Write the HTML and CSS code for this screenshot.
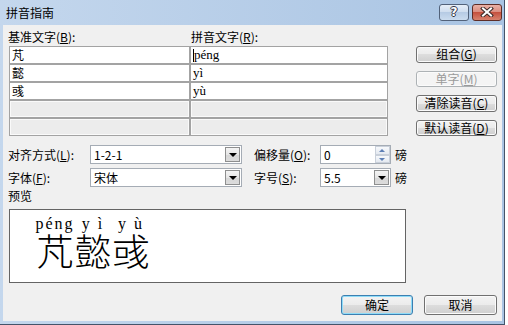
FILE: index.html
```html
<!DOCTYPE html>
<html lang="zh-CN">
<head>
  <meta charset="UTF-8">
  <title>拼音指南</title>
  <link rel="stylesheet" href="styles.css">
</head>
<body>
  <div class="window">
    <div class="titlebar">
      <span class="title">拼音指南</span>
      <div class="caption">
        <span class="cap help">?</span>
        <span class="cap close">
          <svg width="14" height="10" viewBox="0 0 14 10">
            <path d="M3 1.5 L11 8.5 M11 1.5 L3 8.5" stroke="#3a2a28" stroke-width="4" stroke-linecap="square"/>
            <path d="M3 1.5 L11 8.5 M11 1.5 L3 8.5" stroke="#fff" stroke-width="2" stroke-linecap="square"/>
          </svg>
        </span>
      </div>
    </div>
    <div class="client">
      <div class="upper">
        <div class="base">
          <div class="heads">
            <span class="head-base">基准文字(<u>B</u>):</span>
            <span>拼音文字(<u>R</u>):</span>
          </div>
          <div class="grid">
            <div class="cell">芃</div>
            <div class="cell pin"><span class="caret"></span>péng</div>
            <div class="cell">懿</div>
            <div class="cell pin">yì</div>
            <div class="cell">彧</div>
            <div class="cell pin">yù</div>
            <div class="cell empty"></div>
            <div class="cell empty"></div>
            <div class="cell empty"></div>
            <div class="cell empty"></div>
          </div>
        </div>
        <div class="side">
          <div class="btn">组合(<u>G</u>)</div>
          <div class="btn disabled">单字(<u>M</u>)</div>
          <div class="btn">清除读音(<u>C</u>)</div>
          <div class="btn">默认读音(<u>D</u>)</div>
        </div>
      </div>

      <div class="opts">
        <span>对齐方式(<u>L</u>):</span>
        <div class="field">1-2-1<span class="drop"></span></div>
        <span class="label2">偏移量(<u>O</u>):</span>
        <div class="field">0<span class="spin"><i class="up"></i><i class="down"></i></span></div>
        <span class="unit">磅</span>

        <span>字体(<u>F</u>):</span>
        <div class="field">宋体<span class="drop"></span></div>
        <span class="label2">字号(<u>S</u>):</span>
        <div class="field">5.5<span class="drop"></span></div>
        <span class="unit">磅</span>
      </div>

      <div class="plabel">预览</div>
      <div class="preview">
        <div class="ruby">
          <div class="rb"><span class="rt">péng</span><span class="rc">芃</span></div>
          <div class="rb"><span class="rt">y ì</span><span class="rc">懿</span></div>
          <div class="rb"><span class="rt">y ù</span><span class="rc">彧</span></div>
        </div>
      </div>

      <div class="footer">
        <div class="btn big default">确定</div>
        <div class="btn big cancel">取消</div>
      </div>
    </div>
  </div>
</body>
</html>
```

FILE: styles.css
```css
body {
  margin: 0;
  background: #fff;
  color: #000;
  font-family: "Noto Sans CJK SC", sans-serif;
  font-size: 12px;
}
u {
  text-decoration: underline;
  text-underline-offset: 1px;
}
.window {
  width: 505px;
  height: 325px;
  box-sizing: border-box;
  display: flex;
  flex-direction: column;
  background: linear-gradient(to right, #c4d7ed, #a9c4e3);
  border-right: 1px solid #44546a;
  border-bottom: 1px solid #44546a;
}
.titlebar {
  height: 25px;
  flex: none;
  display: flex;
  align-items: center;
  justify-content: space-between;
  padding: 0 2px 0 6px;
}
.title {
  font-size: 12px;
  line-height: 14px;
}
.caption {
  display: flex;
  gap: 3px;
  margin-top: -1px;
}
.cap {
  width: 30px;
  height: 17px;
  box-sizing: border-box;
  border: 1px solid #52627a;
  border-radius: 3px;
  display: flex;
  align-items: center;
  justify-content: center;
}
.help {
  background: linear-gradient(#e6eef8, #cddcee 50%, #b6cbe4 50%, #cbdcef);
  color: #fff;
  font-family: "DejaVu Sans", sans-serif;
  font-weight: bold;
  font-size: 12px;
  line-height: 12px;
  text-shadow: 1px 0 #334, -1px 0 #334, 0 1px #334, 0 -1px #334;
}
.close {
  background: linear-gradient(#eab1a6, #d98a7c 50%, #c5513f 50%, #d7826e);
  border-color: #5e2d26;
}
.client {
  flex: 1;
  margin: 0 2px 3px 3px;
  background: #f0f0f0;
  padding: 4px 5px 0 5px;
}
.upper {
  display: flex;
  height: 107px;
}
.base {
  width: 380px;
}
.heads {
  display: flex;
  height: 17px;
  line-height: 15px;
}
.head-base {
  width: 183px;
}
.grid {
  margin-left: 1px;
  display: grid;
  grid-template-columns: 179px 196px;
  grid-auto-rows: 16px;
  gap: 2px;
  padding: 1px;
  background: #a3a3a3;
}
.cell {
  background: #fff;
  padding-left: 2px;
  line-height: 16px;
  display: flex;
  align-items: center;
}
.cell.pin {
  font-family: "Liberation Serif", serif;
  font-size: 13px;
}
.caret {
  width: 1px;
  height: 13px;
  background: #000;
  margin-right: 0;
}
.cell.empty {
  background: #ececec;
  box-shadow: inset 0 0 0 1px #fafafa;
}
.side {
  margin-left: 28px;
  padding-top: 17px;
  width: 82px;
  display: flex;
  flex-direction: column;
  gap: 8px;
}
.btn {
  height: 19px;
  box-sizing: border-box;
  border: 1px solid #707070;
  border-radius: 3px;
  background: linear-gradient(#f3f3f3, #ebebeb 50%, #dddddd 50%, #cfcfcf);
  box-shadow: inset 0 0 0 1px #fbfbfb;
  display: flex;
  align-items: center;
  justify-content: center;
  line-height: 14px;
}
.btn.disabled {
  color: #9a9a9a;
  border-color: #adb2b5;
  background: #f4f4f4;
}
.opts {
  margin-top: 9px;
  display: grid;
  grid-template-columns: 82px 152px 78px 71px auto;
  grid-template-rows: 19px 19px;
  row-gap: 4px;
  align-items: center;
}
.label2 {
  padding-left: 12px;
}
.unit {
  padding-left: 4px;
}
.field {
  height: 19px;
  box-sizing: border-box;
  border: 1px solid #a5acb5;
  background: #fff;
  display: flex;
  align-items: center;
  padding-left: 3px;
}
.drop {
  margin-left: auto;
  margin-right: 1px;
  width: 15px;
  height: 15px;
  box-sizing: border-box;
  border: 1px solid #8e8f8f;
  background: linear-gradient(#f4f4f4, #e6e6e6 50%, #d6d6d6 50%, #dcdcdc);
  position: relative;
}
.drop::after {
  content: "";
  position: absolute;
  left: 3px;
  top: 5px;
  border-left: 4px solid transparent;
  border-right: 4px solid transparent;
  border-top: 4px solid #000;
}
.spin {
  margin-left: auto;
  width: 15px;
  height: 17px;
  display: flex;
  flex-direction: column;
}
.spin i {
  flex: 1;
  box-sizing: border-box;
  border: 1px solid #c9d0da;
  background: linear-gradient(#f7f9fc, #e4e9f0);
  position: relative;
}
.spin i::after {
  content: "";
  position: absolute;
  left: 3px;
  top: 2px;
  border-left: 3px solid transparent;
  border-right: 3px solid transparent;
}
.spin .up::after {
  border-bottom: 3px solid #5d7fb5;
}
.spin .down::after {
  border-top: 3px solid #5d7fb5;
}
.plabel {
  margin-top: 1px;
  line-height: 16px;
}
.preview {
  margin-top: 5px;
  margin-left: 1px;
  width: 397px;
  height: 74px;
  box-sizing: border-box;
  border: 1px solid #646464;
  background: #fff;
  padding: 6px 0 0 26px;
}
.ruby {
  display: flex;
}
.rb {
  width: 38px;
  display: flex;
  flex-direction: column;
  align-items: center;
}
.rt {
  font-family: "Liberation Serif", serif;
  font-size: 16px;
  line-height: 16px;
  letter-spacing: 2px;
  white-space: pre;
}
.rc {
  font-size: 37px;
  line-height: 37px;
  font-weight: 300;
}
.footer {
  margin-top: 12px;
  display: flex;
  justify-content: flex-end;
  gap: 11px;
}
.btn.big {
  height: 20px;
}
.btn.default {
  width: 72px;
  border-color: #3c7fb1;
  box-shadow: inset 0 0 0 1px #8fdcf8;
}
.btn.cancel {
  width: 73px;
}
```
